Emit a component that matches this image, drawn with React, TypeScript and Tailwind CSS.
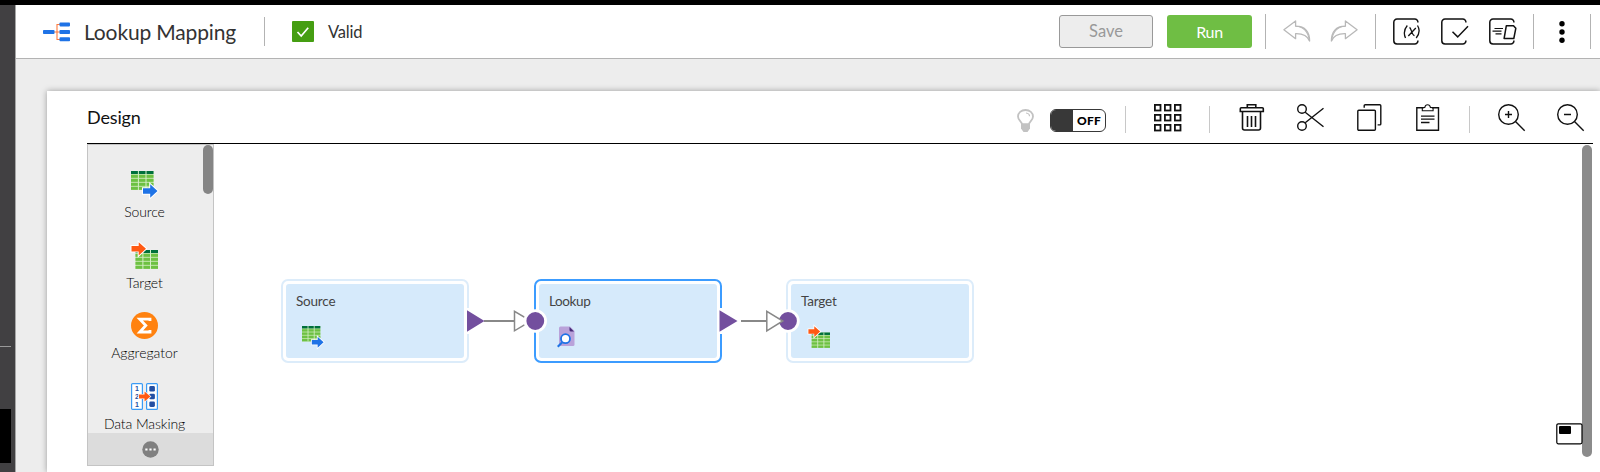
import React from "react";

const Divider = ({ className }: { className: string }) => (
  <div className={`w-px shrink-0 ${className}`} />
);

const TableGrid = ({ x, y }: { x: number; y: number }) => (
  <g transform={`translate(${x} ${y})`}>
    <rect width="22.5" height="19" fill="#b5e09b" />
    <rect width="22.5" height="3" fill="#00703c" />
    {[4, 8, 12, 16].map((r) => (
      <rect key={r} y={r} width="22.5" height="2.8" fill="#6dc143" />
    ))}
    <path d="M7.4 0v19M15 0v19" stroke="#d5eec8" strokeWidth="1" />
  </g>
);

const SourceIcon = ({ size }: { size: number }) => (
  <svg width={size} height={size} viewBox="0 0 27 27" className="block shrink-0 overflow-visible">
    <TableGrid x={0} y={0} />
    <path d="M12 17.3h7.200v-4L26.500 20l-7.300 6.700v-4H12z" fill="#1f73e6" stroke="#fff" strokeWidth="2" paintOrder="stroke" />
  </svg>
);

const TargetIcon = ({ size }: { size: number }) => (
  <svg width={size} height={size} viewBox="0 0 27 27" className="block shrink-0 overflow-visible">
    <TableGrid x={4.5} y={8} />
    <path d="M.5 4.100h7.200V.2L15 6.800l-7.300 6.600V9.500H.5z" fill="#ff5a14" stroke="#fff" strokeWidth="2" paintOrder="stroke" />
  </svg>
);

const AggregatorIcon = () => (
  <svg width="27" height="27" viewBox="0 0 27 27" className="block">
    <circle cx="13.5" cy="13.5" r="13.5" fill="#ff8210" />
    <path d="M19 9V7.200H8.800l6 6.300-6 6.500H19v-2" fill="none" stroke="#fff" strokeWidth="2.8" />
  </svg>
);

const MaskingIcon = () => (
  <svg width="27" height="27" viewBox="0 0 27 27" className="block">
    <rect x=".6" y=".6" width="10.8" height="25.8" rx="1" fill="#fff" stroke="#3b9bf5" strokeWidth="1.2" />
    <rect x="15.6" y=".6" width="10.8" height="25.8" rx="1" fill="#fff" stroke="#3b9bf5" strokeWidth="1.2" />
    <g fill="#234fa3" fontFamily="Liberation Sans" fontSize="7" fontWeight="700">
      <text x="4" y="8.3">1</text>
      <text x="4" y="16">2</text>
      <text x="4" y="23.6">1</text>
    </g>
    <g fill="#234fa3">
      <rect x="18.3" y="3" width="5.6" height="5.6" rx="1.4" />
      <rect x="18.3" y="10.7" width="5.6" height="5.6" rx="1.4" />
      <rect x="18.3" y="18.4" width="5.6" height="5.6" rx="1.4" />
    </g>
    <path d="M8 11.500h5.500V8.500l6 5-6 5v-3H8z" fill="#ff5a14" stroke="#fff" strokeWidth="1.200" paintOrder="stroke" />
  </svg>
);

const LookupIcon = () => (
  <svg width="18" height="22" viewBox="0 0 18 22" className="block">
    <path d="M3.500.5H13L17.500 5v13.500a1.500 1.500 0 0 1-1.500 1.500H3.500A1.500 1.500 0 0 1 2 18.500V2A1.500 1.500 0 0 1 3.500.5z" fill="#b9a2da" />
    <path d="M12.500 1 17 5.500h-3A1.500 1.500 0 0 1 12.500 4z" fill="#462a77" />
    <path d="m5 16.500-4.300 4.300" stroke="#1f73e6" strokeWidth="2.200" />
    <circle cx="8.500" cy="12.700" r="4.500" fill="#fff" stroke="#1f73e6" strokeWidth="1.800" />
  </svg>
);

const MappingLogo = () => (
  <svg width="27" height="20" viewBox="0 0 27 20" className="block shrink-0">
    <path d="M17 2.500h-3v15h3M10 10h7" fill="none" stroke="#ff7a3c" strokeWidth="1.100" />
    <g fill="#1f73e6">
      <rect y="8" width="11.500" height="4" rx=".8" />
      <rect x="16.500" y=".4" width="10.500" height="4" rx=".8" />
      <rect x="16.500" y="8" width="10.500" height="4" rx=".8" />
      <rect x="16.500" y="15.300" width="10.500" height="4" rx=".8" />
    </g>
  </svg>
);

const UndoIcon = ({ flip }: { flip?: boolean }) => (
  <svg width="28" height="23" viewBox="0 0 28 23" className={flip ? "block -scale-x-100" : "block"}>
    <path
      d="M.9 9.800 12.600.9v5.300c9.500-.1 14 5.500 14 14.900-2-5-6.500-7.600-14-7.400v5z"
      fill="none"
      stroke="#b8b8b8"
      strokeWidth="1.300"
      strokeLinejoin="round"
    />
    <path d="M12.600 6.200c7.800.3 12.600 5.500 13.800 14.500" fill="none" stroke="#b8b8b8" strokeWidth="1.100" />
  </svg>
);

const PanelIcon = ({ children }: { children: React.ReactNode }) => (
  <svg width="28" height="28" viewBox="0 0 28 28" fill="none" stroke="#111" strokeWidth="1.500" className="block">
    <path d="M24.900 4.500A3.200 3.200 0 0 0 21.700 1H4A3.200 3.200 0 0 0 .8 4.200v18.600A3.200 3.200 0 0 0 4 26h17.700a3.200 3.200 0 0 0 3.200-3.500" />
    {children}
  </svg>
);

const Tool = ({ children }: { children: React.ReactNode }) => (
  <svg width="28" height="28" viewBox="0 0 28 28" fill="none" stroke="#111" strokeWidth="1.400" className="block shrink-0">
    {children}
  </svg>
);

const Node = ({
  name,
  box,
  border,
  tracking,
  pad,
  children,
}: {
  name: string;
  box: string;
  border: string;
  tracking: string;
  pad: string;
  children: React.ReactNode;
}) => (
  <div className={`absolute top-[135px] h-[84px] w-[188px] rounded-[7px] border-[2.500px] bg-white p-[3px] ${box} ${border}`}>
    <div className="h-full rounded-[3px] bg-[#d6eafb] pl-[10px] pt-[8px]">
      <div className={`text-[13.5px] leading-[18px] text-[#444] ${tracking}`}>{name}</div>
      <div className={`pt-[16px] ${pad}`}>{children}</div>
    </div>
  </div>
);

const PaletteItem = ({ label, tracking, children }: { label: string; tracking: string; children: React.ReactNode }) => (
  <div className="flex h-[70.500px] shrink-0 flex-col items-center">
    {children}
    <div className={`mt-[5px] text-[14px] font-light leading-[18px] whitespace-nowrap text-black ${tracking}`}>{label}</div>
  </div>
);

export default function App() {
  return (
    <div className="flex h-[472px] w-[1600px] flex-col overflow-hidden bg-[#ededed] font-['Lato',sans-serif]">
      <div className="h-[5px] shrink-0 bg-black" />
      <div className="flex min-h-0 flex-1">
        <aside className="flex w-[16px] shrink-0 flex-col border-r border-[#a6a6a6] bg-[#414042] pt-[341px]">
          <div className="h-px w-[11px] bg-[#999]" />
          <div className="mt-[62px] h-[54px] w-[11px] bg-black" />
        </aside>

        <main className="flex min-w-0 flex-1 flex-col overflow-hidden">
          <header className="flex h-[54px] shrink-0 items-center border-b border-[#b3b3b3] bg-white pl-[27px]">
            <MappingLogo />
            <h1 className="ml-[14px] w-[180px] whitespace-nowrap text-[21px] leading-[28px] tracking-[-0.15px] text-[#333]">
              Lookup Mapping
            </h1>
            <Divider className="h-[29px] bg-[#b3b3b3]" />
            <div className="ml-[27px] flex h-[21px] w-[22px] items-center justify-center rounded-[1px] bg-[#459e12]">
              <svg width="14" height="12" viewBox="0 0 14 12">
                <path d="m1.500 6 3.700 4 7-8.300" fill="none" stroke="#fff" strokeWidth="1.700" />
              </svg>
            </div>
            <span className="ml-[14px] w-[731px] text-[16.500px] leading-[24px] tracking-[-0.2px] text-[#333]">Valid</span>
            <button className="flex h-[33px] w-[94px] shrink-0 items-center justify-center rounded-[3px] border border-[#999] bg-[#ededed] text-[16.500px] text-[#999]">
              Save
            </button>
            <button className="ml-[14px] flex h-[33px] w-[85px] shrink-0 items-center justify-center rounded-[3px] bg-[#6fbe44] pt-px text-[16px] tracking-[-0.4px] text-white">
              Run
            </button>
            <Divider className="ml-[13px] h-[35px] bg-[#b3b3b3]" />
            <div className="ml-[17px]"><UndoIcon /></div>
            <div className="ml-[19px]"><UndoIcon flip /></div>
            <Divider className="ml-[17px] h-[35px] bg-[#b3b3b3]" />
            <div className="ml-[17px] flex gap-[20px]">
              <PanelIcon>
                <path d="M14.300 7.500c-3.200 3.800-3.800 8-1.800 12.500M24.500 7.500c2.500 4 1.900 8.500-1.300 12.500M15.300 18l7.500-8M16.500 9.500c1.800.5 2.200 7.500 5 8.200" strokeWidth="1.300" />
              </PanelIcon>
              <PanelIcon>
                <path d="m11.500 13.700 5.200 5.200L27 8.200" />
              </PanelIcon>
              <PanelIcon>
                <path d="M17.300 7.800h7.200l2.300 2.500-2 10.200h-9.700z" strokeLinejoin="round" />
                <path d="M5.500 10.500h8.500M3.500 13.200h9M6.500 15.900h6" strokeWidth="1.200" />
              </PanelIcon>
            </div>
            <Divider className="ml-[16px] h-[35px] bg-[#b3b3b3]" />
            <svg width="6" height="22" viewBox="0 0 6 22" className="ml-[25px]">
              <circle cx="3" cy="2.800" r="2.700" />
              <circle cx="3" cy="11" r="2.700" />
              <circle cx="3" cy="19.200" r="2.700" />
            </svg>
            <Divider className="ml-[25px] h-[35px] bg-[#b3b3b3]" />
          </header>

          <section className="ml-[31px] mt-[32px] flex min-h-0 flex-1 flex-col bg-white pl-[40px] shadow-[0_0_6px_rgba(0,0,0,0.35)]">
            <div className="flex h-[53px] w-[1506px] shrink-0 items-start border-b border-black pt-[13px]">
              <h2 className="w-[930px] text-[18px] leading-[27px] tracking-[-0.15px] text-[#111]">Design</h2>
              <svg width="17" height="24" viewBox="0 0 17 24" className="mt-[5px] shrink-0">
                <path d="M5 15.500c0-3-4-4-4-8C1 3.800 4.200 1 8.500 1S16 3.800 16 7.500c0 4-4 5-4 8z" fill="none" stroke="#c2c2c2" strokeWidth="1.800" />
                <path d="M4 14.500h9v5L10.500 23h-4L4 19.500z" fill="#c2c2c2" />
                <path d="M9 4c2 .2 3.500 1.200 3.500 3.200" fill="none" stroke="#c2c2c2" strokeWidth="1.200" />
              </svg>
              <div className="ml-[16px] mt-[5px] flex h-[23px] w-[56px] shrink-0 items-center overflow-hidden rounded-[6px] border border-[#383838] bg-white">
                <div className="h-full w-[22px] bg-[#383838]" />
                <span className="ml-[4px] text-[12px] font-black leading-none tracking-[0.3px]">OFF</span>
              </div>
              <Divider className="ml-[19px] mt-[2px] h-[27px] bg-[#c8c8c8]" />
              <div className="ml-[28px]">
                <Tool>
                  {[0.9, 10.9, 20.9].map((y) =>
                    [0.9, 10.9, 20.9].map((x) => (
                      <rect key={`${x}-${y}`} x={x} y={y} width="5.600" height="5.600" strokeWidth="1.800" />
                    ))
                  )}
                </Tool>
              </div>
              <Divider className="ml-[27px] mt-[2px] h-[27px] bg-[#c8c8c8]" />
              <div className="ml-[28px]">
                <Tool>
                  <path d="M3.300 3.700h21a1 1 0 0 1 1 1v2.800h-23V4.700a1 1 0 0 1 1-1zM9.300 3.700V.8h8.500v2.900M4.500 7.500V24a2 2 0 0 0 2 2h14a2 2 0 0 0 2-2V7.500M9.500 12v11M13.500 12v11M17.500 12v11" strokeWidth="1.600" />
                </Tool>
              </div>
              <div className="ml-[31px]">
                <Tool>
                  <circle cx="5" cy="5" r="4.300" />
                  <circle cx="5" cy="22" r="4.300" />
                  <path d="m8.200 8.200 18.300 14.600M8.200 18.800 26.500 4.200" />
                </Tool>
              </div>
              <div className="ml-[32px]">
                <Tool>
                  <rect x=".8" y="6.200" width="17.600" height="20" rx="1" />
                  <path d="M7.200 3.800V1.700a1 1 0 0 1 1-1h14.600a1 1 0 0 1 1 1v18.200a1 1 0 0 1-1 1h-2.200" />
                </Tool>
              </div>
              <div className="ml-[31px]">
                <Tool>
                  <path d="M7.500 3.700H.8v22.500h21.700V3.700h-6.500" />
                  <path d="M6.300 6.800v-3l2.500-.4c.3-1.700 1-2.600 2.800-2.600s2.500.9 2.800 2.600l2.700.4v3z" strokeWidth="1.100" />
                  <path d="M5 12.200h13.500M5 15.200h13.500M5 18.500h8.500" strokeWidth="1.300" />
                </Tool>
              </div>
              <Divider className="ml-[25px] mt-[2px] h-[27px] bg-[#c8c8c8]" />
              <div className="ml-[28px]">
                <Tool>
                  <circle cx="10.500" cy="10.500" r="9.800" />
                  <path d="m17.500 17.500 9.200 9.200M7 10.500h7M10.500 7v7" />
                </Tool>
              </div>
              <div className="ml-[31px]">
                <Tool>
                  <circle cx="10.500" cy="10.500" r="9.800" />
                  <path d="m17.500 17.500 9.200 9.200M7 10.500h7" />
                </Tool>
              </div>
            </div>

            <div className="flex min-h-0 flex-1">
              <nav className="relative flex h-[322px] w-[127px] shrink-0 flex-col border border-[#c4c4c4] bg-[#ededed]">
                <div className="flex h-[288px] flex-col overflow-hidden pr-[12px] pt-[26px]">
                  <PaletteItem label="Source" tracking="tracking-[-0.1px]"><SourceIcon size={27} /></PaletteItem>
                  <PaletteItem label="Target" tracking="tracking-[-0.1px]"><TargetIcon size={27} /></PaletteItem>
                  <PaletteItem label="Aggregator" tracking="tracking-[0px]"><AggregatorIcon /></PaletteItem>
                  <PaletteItem label="Data Masking" tracking="tracking-[-0.1px]"><MaskingIcon /></PaletteItem>
                </div>
                <div className="flex h-[32px] items-center justify-center bg-[#dcdcdc]">
                  <svg width="17" height="17" viewBox="0 0 17 17">
                    <circle cx="8.500" cy="8.500" r="8.200" fill="#808080" />
                    <path d="M3.300 8.500h2.200M7.400 8.500h2.200M11.500 8.500h2.200" stroke="#fff" strokeWidth="2.200" />
                  </svg>
                </div>
                <div className="absolute right-0 top-0 h-[49px] w-[10px] rounded-full bg-[#858585]" />
              </nav>

              <div className="relative w-[1368px] shrink-0">
                <Node name="Source" box="left-[67px]" border="border-[#dcecfa]" tracking="tracking-[-0.2px]" pad="pl-[6px]"><SourceIcon size={22} /></Node>
                <Node name="Lookup" box="left-[320px]" border="border-[#3c9cff]" tracking="tracking-[-0.4px]" pad="pl-[8px]"><LookupIcon /></Node>
                <Node name="Target" box="left-[572px]" border="border-[#dcecfa]" tracking="tracking-[-0.2px]" pad="pl-[7px]"><TargetIcon size={22} /></Node>
                <svg className="absolute left-[250px] top-[162px]" width="340" height="30" viewBox="464 306 340 30">
                  <path d="M467 308h4v26h-4zM719 308h4v26h-4z" fill="#fff" />
                  <path d="M484 321h30M741 321h26" stroke="#888" strokeWidth="1.900" />
                  <path d="M467 310.300 484.500 321l-17.500 10.700zM719.500 310.300 737.500 321l-18 10.700z" fill="#734f9e" />
                  <path d="M514.500 311.300v19.500l16.500-9.800z" fill="#fff" stroke="#888" strokeWidth="1.500" />
                  <circle cx="535.300" cy="321" r="10.300" fill="#734f9e" stroke="#fff" strokeWidth="2.800" />
                  <circle cx="788" cy="321" r="10.300" fill="#734f9e" stroke="#fff" strokeWidth="2.800" />
                  <path d="M766.800 311.300v19.500l16-9.800z" fill="#fff" stroke="#888" strokeWidth="1.500" />
                </svg>
                <svg className="absolute left-[1342px] top-[279px]" width="27" height="22" viewBox="0 0 27 22">
                  <rect x=".8" y=".8" width="25.200" height="20" rx="1.500" fill="#fff" stroke="#000" strokeWidth="1.200" />
                  <rect x="3" y="3" width="12" height="8" rx="1" />
                </svg>
              </div>
              <div className="mt-px h-[312px] w-[10px] shrink-0 rounded-full bg-[#8b8b8b]" />
            </div>
          </section>
        </main>
      </div>
    </div>
  );
}
